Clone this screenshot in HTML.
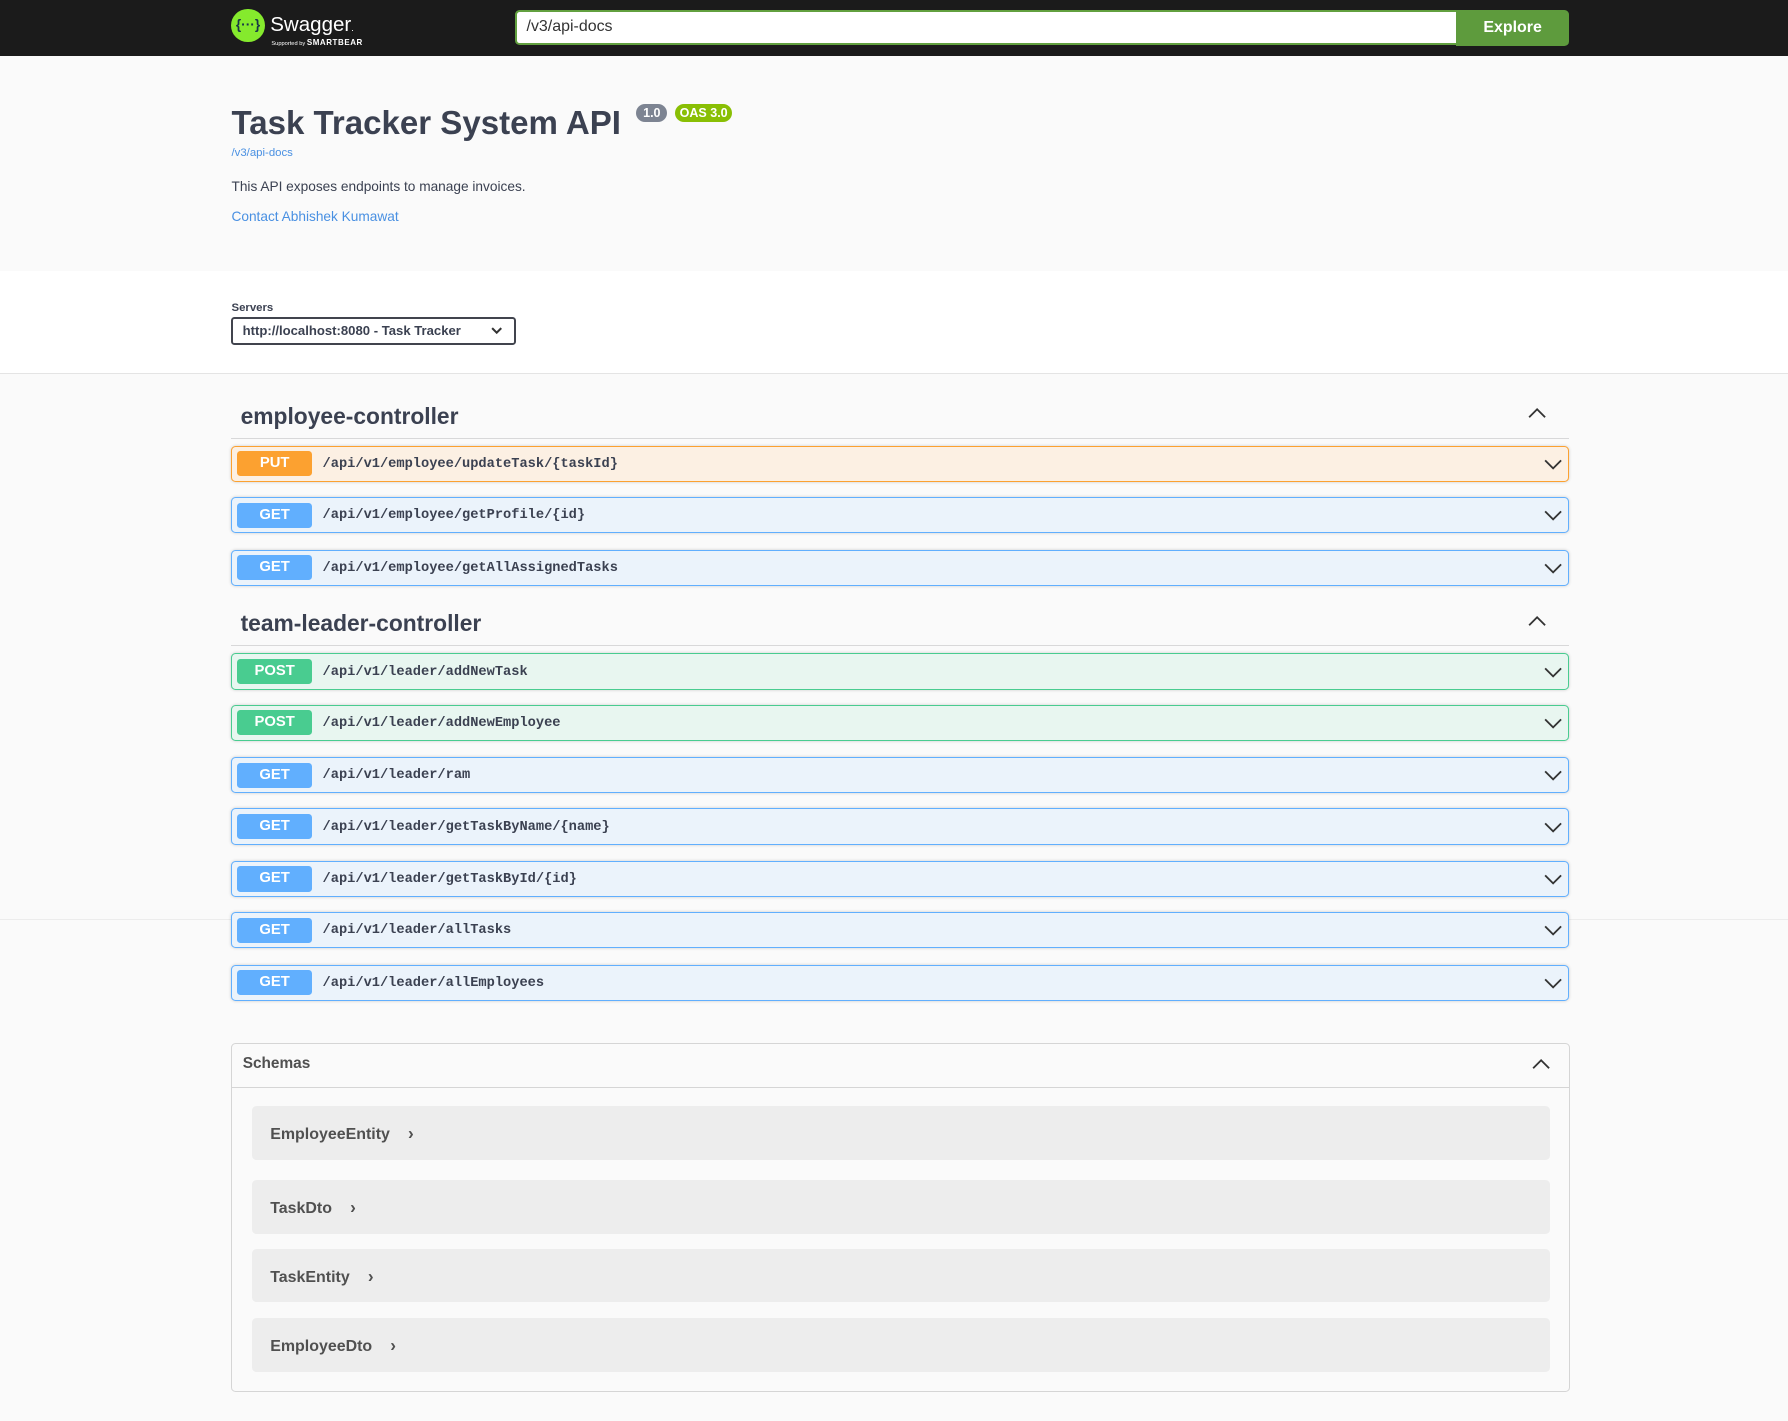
<!DOCTYPE html>
<html><head><meta charset="utf-8"><style>
html{zoom:1.1403}
body{margin:0;width:1568px;height:1246px;position:relative;background:#fafafa;font-family:"Liberation Sans",Arial,sans-serif;color:#3b4151;overflow:hidden}
.a{position:absolute}
.top{left:0;top:0;width:1568px;height:49px;background:#1b1b1b}
.info{left:0;top:49px;width:1568px;height:189px;background:#fafafa}
.srv{left:0;top:238px;width:1568px;height:89px;background:#fff;border-bottom:1px solid #e4e4e4}
.op{position:absolute;left:203px;width:1171px;height:30px;border:1px solid;border-radius:4px;box-shadow:0 0 3px rgba(0,0,0,.19)}
.op .m{position:absolute;left:4px;top:4px;width:66px;height:22px;border-radius:3px;color:#fff;font-weight:bold;font-size:13px;line-height:22px;text-align:center}
.op .p{position:absolute;left:79px;top:1px;line-height:30px;font-family:"Liberation Mono",monospace;font-weight:bold;font-size:12px;color:#3b4151}
.op svg{position:absolute;right:5px;top:9px}
.put{background:#fcf0e3;border-color:#fca130}.put .m{background:#fca130}
.get{background:#ebf3fb;border-color:#61affe}.get .m{background:#61affe}
.post{background:#e8f6f0;border-color:#49cc90}.post .m{background:#49cc90}
.ctl{position:absolute;left:203px;width:1173px;border-bottom:1px solid #d8d8d9;height:37px}
.ctl span{position:absolute;left:8px;top:6px;font-size:20px;font-weight:bold}
.ctl svg{position:absolute;right:20px;top:10px}
.sch{position:absolute;left:221px;width:1138px;height:47px;background:#ededed;border-radius:4px}
.sch span{position:absolute;left:16px;top:16px;font-size:14px;font-weight:bold;color:#505050}
.sch b{display:inline-block;margin-left:12px;font-size:15px}
</style></head><body>
<div class="a top">
 <div class="a" style="left:203px;top:8px;width:29px;height:29px;border-radius:50%;background:#85ea2d;color:#173647;font-size:12px;font-weight:bold;text-align:center;line-height:28px">{···}</div>
 <div class="a" style="left:237px;top:11px;color:#fff;font-size:18px">Swagger<span style="font-size:8px">.</span></div>
 <div class="a" style="left:238px;top:33px;color:#fff;font-size:5px">Supported by <b style="font-size:7px;letter-spacing:.5px">SMARTBEAR</b></div>
 <div class="a" style="left:452px;top:9px;height:27px;background:#fff;border:2px solid #62a03f;border-right:none;border-radius:4px 0 0 4px;font-size:14px;line-height:27px;padding-left:8px;box-sizing:content-box;width:815px;color:#333">/v3/api-docs</div>
 <div class="a" style="left:1277px;top:9px;width:99px;height:31px;background:#5e9b3d;border-radius:0 4px 4px 0;color:#fff;font-weight:bold;font-size:14px;text-align:center;line-height:31px">Explore</div>
</div>
<div class="a info">
 <div class="a" style="left:203px;top:43px;font-size:29px;font-weight:bold;color:#3b4151">Task Tracker System API</div>
 <div class="a" style="left:558px;top:42px;height:16px;padding:0 6px;background:#7d8492;border-radius:8px;color:#fff;font-size:11px;font-weight:bold;line-height:16px">1.0</div>
 <div class="a" style="left:592px;top:42px;height:16px;padding:0 4px;background:#89bf04;border-radius:8px;color:#fff;font-size:11px;font-weight:bold;line-height:16px">OAS 3.0</div>
 <div class="a" style="left:203px;top:80px;font-size:10px;color:#4990e2">/v3/api-docs</div>
 <div class="a" style="left:203px;top:108px;font-size:12px;color:#3b4151">This API exposes endpoints to manage invoices.</div>
 <div class="a" style="left:203px;top:134px;font-size:12px;color:#4990e2">Contact Abhishek Kumawat</div>
</div>
<div class="a srv">
 <div class="a" style="left:203px;top:27px;font-size:10px;font-weight:bold">Servers</div>
 <div class="a" style="left:203px;top:40px;height:21px;border:2px solid #41444e;border-radius:3px;font-size:11.5px;font-weight:bold;line-height:21px;padding-left:8px;box-sizing:content-box;width:238px">http://localhost:8080 - Task Tracker
  <svg class="a" style="right:10px;top:7px" width="10" height="7" viewBox="0 0 10 7"><path d="M1 1l4 4 4-4" stroke="#333" stroke-width="1.8" fill="none"/></svg></div>
</div>
<div class="a" style="left:0;top:806px;width:1568px;height:1px;background:#ececec"></div>

<div class="ctl" style="top:347px"><span>employee-controller</span><svg width="16" height="10" viewBox="0 0 16 10"><path d="M1 9l7-7 7 7" stroke="#333" stroke-width="1.6" fill="none"/></svg></div>
<div class="op put" style="top:391px"><div class="m">PUT</div><div class="p">/api/v1/employee/updateTask/{taskId}</div><svg width="16" height="12" viewBox="0 0 16 12"><path d="M1 3l7 7 7-7" stroke="#333" stroke-width="1.6" fill="none"/></svg></div>
<div class="op get" style="top:436px"><div class="m">GET</div><div class="p">/api/v1/employee/getProfile/{id}</div><svg width="16" height="12" viewBox="0 0 16 12"><path d="M1 3l7 7 7-7" stroke="#333" stroke-width="1.6" fill="none"/></svg></div>
<div class="op get" style="top:482px"><div class="m">GET</div><div class="p">/api/v1/employee/getAllAssignedTasks</div><svg width="16" height="12" viewBox="0 0 16 12"><path d="M1 3l7 7 7-7" stroke="#333" stroke-width="1.6" fill="none"/></svg></div>

<div class="ctl" style="top:529px"><span>team-leader-controller</span><svg width="16" height="10" viewBox="0 0 16 10"><path d="M1 9l7-7 7 7" stroke="#333" stroke-width="1.6" fill="none"/></svg></div>
<div class="op post" style="top:573px"><div class="m">POST</div><div class="p">/api/v1/leader/addNewTask</div><svg width="16" height="12" viewBox="0 0 16 12"><path d="M1 3l7 7 7-7" stroke="#333" stroke-width="1.6" fill="none"/></svg></div>
<div class="op post" style="top:618px"><div class="m">POST</div><div class="p">/api/v1/leader/addNewEmployee</div><svg width="16" height="12" viewBox="0 0 16 12"><path d="M1 3l7 7 7-7" stroke="#333" stroke-width="1.6" fill="none"/></svg></div>
<div class="op get" style="top:664px"><div class="m">GET</div><div class="p">/api/v1/leader/ram</div><svg width="16" height="12" viewBox="0 0 16 12"><path d="M1 3l7 7 7-7" stroke="#333" stroke-width="1.6" fill="none"/></svg></div>
<div class="op get" style="top:709px"><div class="m">GET</div><div class="p">/api/v1/leader/getTaskByName/{name}</div><svg width="16" height="12" viewBox="0 0 16 12"><path d="M1 3l7 7 7-7" stroke="#333" stroke-width="1.6" fill="none"/></svg></div>
<div class="op get" style="top:755px"><div class="m">GET</div><div class="p">/api/v1/leader/getTaskById/{id}</div><svg width="16" height="12" viewBox="0 0 16 12"><path d="M1 3l7 7 7-7" stroke="#333" stroke-width="1.6" fill="none"/></svg></div>
<div class="op get" style="top:800px"><div class="m">GET</div><div class="p">/api/v1/leader/allTasks</div><svg width="16" height="12" viewBox="0 0 16 12"><path d="M1 3l7 7 7-7" stroke="#333" stroke-width="1.6" fill="none"/></svg></div>
<div class="op get" style="top:846px"><div class="m">GET</div><div class="p">/api/v1/leader/allEmployees</div><svg width="16" height="12" viewBox="0 0 16 12"><path d="M1 3l7 7 7-7" stroke="#333" stroke-width="1.6" fill="none"/></svg></div>

<div class="a" style="left:203px;top:915px;width:1172px;height:304px;border:1px solid #d5d5d5;border-radius:4px">
 <div class="a" style="left:0;top:0;width:1172px;height:37px;border-bottom:1px solid #d5d5d5"></div>
 <div class="a" style="left:9px;top:9px;font-size:13.5px;font-weight:bold;color:#505050">Schemas</div>
 <svg class="a" style="left:1140px;top:12px" width="16" height="10" viewBox="0 0 16 10"><path d="M1 9l7-7 7 7" stroke="#333" stroke-width="1.6" fill="none"/></svg>
</div>
<div class="sch" style="top:970px"><span>EmployeeEntity <b>›</b></span></div>
<div class="sch" style="top:1035px"><span>TaskDto <b>›</b></span></div>
<div class="sch" style="top:1095px"><span>TaskEntity <b>›</b></span></div>
<div class="sch" style="top:1156px"><span>EmployeeDto <b>›</b></span></div>
</body></html>
